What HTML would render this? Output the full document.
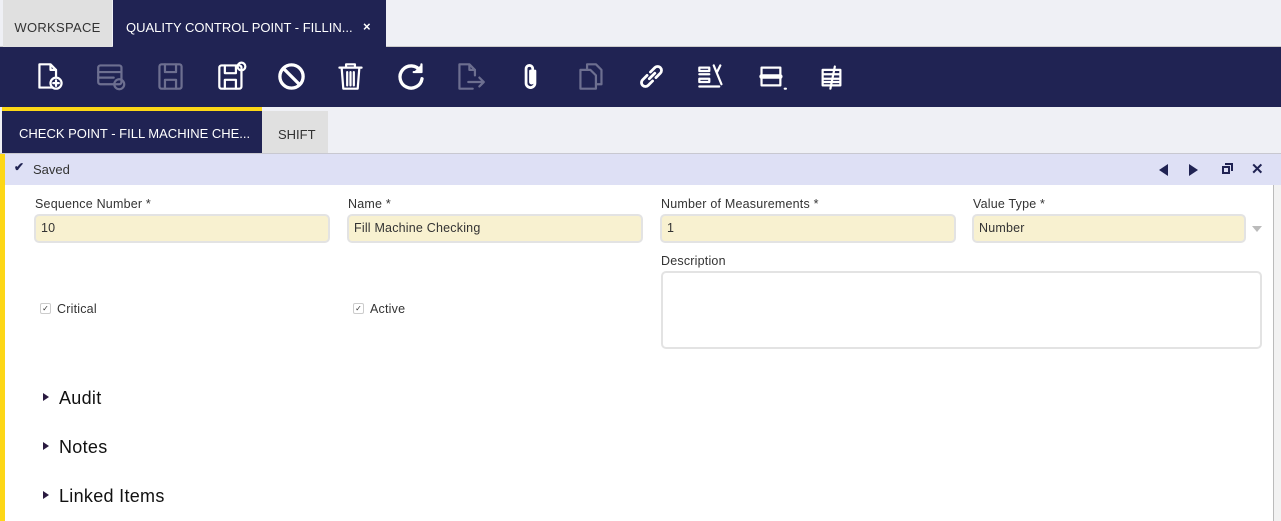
<!DOCTYPE html>
<html><head><style>
*{box-sizing:border-box;margin:0;padding:0}
body{width:1281px;height:521px;overflow:hidden;background:#fff;font-family:"Liberation Sans",sans-serif;position:relative;color:#333}
.a{position:absolute}
.lbl{position:absolute;font-size:12.5px;color:#333;letter-spacing:0.2px}
.inp{position:absolute;height:29px;background:#f8f1d0;border:2px solid #e3e3e3;border-radius:5px;font-size:12.5px;padding:5px 0 0 5px;color:#333;letter-spacing:0.2px}
.sec{position:absolute;left:43px;font-size:18px;color:#111;letter-spacing:0.3px}
.sec:before{content:"";display:inline-block;border-left:6px solid #2a1a40;border-top:4px solid transparent;border-bottom:4px solid transparent;margin-right:10px;vertical-align:3px}
.cb{position:absolute;width:11px;height:11px;border:1px solid #ccc;border-radius:2px;font-size:8px;line-height:9px;text-align:center;color:#333}
svg.i{position:absolute;top:61px;width:31px;height:31px;fill:none;stroke-width:2;stroke-linecap:round;stroke-linejoin:round}
</style></head><body>
<div class="a" style="left:0;top:0;width:1281px;height:47px;background:#eff0f5"></div>
<div class="a" style="left:0;top:46px;width:1281px;height:1px;background:#ccc"></div>
<div class="a" style="left:3px;top:0;width:109px;height:47px;background:#e0e0e0;font-size:13px;color:#333;padding-top:20px;text-align:center;letter-spacing:0.3px">WORKSPACE</div>
<div class="a" style="left:113px;top:0;width:273px;height:47px;background:#202353;color:#fff;font-size:13px;padding:20px 0 0 13px">QUALITY CONTROL POINT - FILLIN...<span style="position:absolute;left:250px;top:19px;font-weight:bold">×</span></div>
<div class="a" style="left:0;top:47px;width:1281px;height:60px;background:#202353"></div>
<svg class="i" style="left:35px" stroke="#fff" viewBox="0 0 28 28"><path d="M16 24H4V3h10l5 5v6M14 3v5h5"/><circle cx="19" cy="20" r="5"/><path d="M19 17.5v5M16.5 20h5"/></svg>
<svg class="i" style="left:96px" stroke="#6d6f90" viewBox="0 0 28 28"><rect x="2" y="4" width="21" height="17" rx="2"/><path d="M2 10h21M2 15h14"/><circle cx="21" cy="21" r="4.5"/></svg>
<svg class="i" style="left:155px" stroke="#6d6f90" viewBox="0 0 28 28"><rect x="4" y="3" width="20" height="22" rx="2"/><path d="M9 3v7h10V3M9 25v-8h10v8"/></svg>
<svg class="i" style="left:216px" stroke="#fff" viewBox="0 0 28 28"><rect x="3" y="4" width="20" height="21" rx="2"/><path d="M8 4v7h10V4M8 25v-8h10v8"/><circle cx="23" cy="5" r="3.5"/></svg>
<svg class="i" style="left:276px" stroke="#fff" viewBox="0 0 28 28"><circle cx="14" cy="14" r="10.5" stroke-width="3"/><path d="M7 7l14 14" stroke-width="3"/></svg>
<svg class="i" style="left:335px" stroke="#fff" viewBox="0 0 28 28"><path d="M4 6h20M10 6V3h8v3M6 6l1.5 19h13L22 6M11 10v12M14 10v12M17 10v12"/></svg>
<svg class="i" style="left:396px" stroke="#fff" viewBox="0 0 28 28"><path d="M22 9a10 10 0 1 0 1.5 7" stroke-width="3"/><path d="M23 3v7h-7" fill="#fff" stroke-width="2"/></svg>
<svg class="i" style="left:455px" stroke="#6d6f90" viewBox="0 0 28 28"><path d="M16 25H4V3h9l5 5v5M13 3v5h5M12 19h14M22 15l4 4-4 4"/></svg>
<svg class="i" style="left:515px" stroke="#fff" viewBox="0 0 28 28"><path d="M18 9v11a4 4 0 0 1-8 0V7a3 3 0 0 1 6 0v12a1 1 0 0 1-2 0V9" stroke-width="2.5"/></svg>
<svg class="i" style="left:576px" stroke="#6d6f90" viewBox="0 0 28 28"><path d="M10 8V3h8l5 5v13h-5M4 8h9l5 5v12H4z"/></svg>
<svg class="i" style="left:636px" stroke="#fff" viewBox="0 0 28 28"><path d="M12 16l5-5M10 13l-4 4a3.5 3.5 0 0 0 5 5l4-4M18 15l4-4a3.5 3.5 0 0 0-5-5l-4 4" stroke-width="2.5"/></svg>
<svg class="i" style="left:696px" stroke="#fff" viewBox="0 0 28 28" stroke-width="1.5"><path d="M3 6h9v3H3zM3 12h9M3 16h9v3H3zM3 23h18M16 4l7 17M22 4l-3 6"/></svg>
<svg class="i" style="left:756px" stroke="#fff" viewBox="0 0 28 28"><rect x="5" y="6" width="17" height="16"/><path d="M5 14h17" stroke-width="4"/><path d="M26 25h1"/></svg>
<svg class="i" style="left:816px" stroke="#fff" viewBox="0 0 28 28" stroke-width="1.5"><path d="M6 8h16v14H6zM6 12h16M6 16h16M6 19h16M17 5l-4 20"/></svg>
<div class="a" style="left:0;top:107px;width:1281px;height:47px;background:#eff0f5"></div>
<div class="a" style="left:2px;top:107px;width:260px;height:4px;background:#fdd716"></div>
<div class="a" style="left:2px;top:111px;width:260px;height:43px;background:#202353;color:#fff;font-size:13px;padding:15px 0 0 17px">CHECK POINT - FILL MACHINE CHE...</div>
<div class="a" style="left:262px;top:111px;width:66px;height:43px;background:#e0e0e0;color:#333;font-size:13px;padding:16px 0 0 16px">SHIFT</div>
<div class="a" style="left:0;top:153px;width:1281px;height:1px;background:#c8c8d0"></div>
<div class="a" style="left:0;top:154px;width:1281px;height:31px;background:#dee0f5;font-size:13px;color:#333;padding:8px 0 0 33px">Saved</div>
<div class="a" style="left:14px;top:160px;font-size:12px;color:#202353;font-weight:bold">✔</div>
<div class="a" style="left:1159px;top:164px;border-right:9px solid #202353;border-top:6px solid transparent;border-bottom:6px solid transparent"></div>
<div class="a" style="left:1189px;top:164px;border-left:9px solid #202353;border-top:6px solid transparent;border-bottom:6px solid transparent"></div>
<div class="a" style="left:1222px;top:166px;width:8px;height:8px;border:2px solid #202353"></div>
<div class="a" style="left:1225px;top:163px;width:8px;height:8px;border-top:2px solid #202353;border-right:2px solid #202353"></div>
<div class="a" style="left:1251px;top:160px;font-size:15px;font-weight:bold;color:#202353">✕</div>
<div class="a" style="left:0;top:154px;width:5px;height:367px;background:#fdd716"></div>
<div class="a" style="left:1273px;top:185px;width:8px;height:336px;background:#f2f2f2;border-left:1px solid #bbb"></div>
<div class="lbl" style="left:35px;top:197px">Sequence Number *</div>
<div class="lbl" style="left:348px;top:197px">Name *</div>
<div class="lbl" style="left:661px;top:197px">Number of Measurements *</div>
<div class="lbl" style="left:973px;top:197px">Value Type *</div>
<div class="inp" style="left:34px;top:214px;width:296px">10</div>
<div class="inp" style="left:347px;top:214px;width:296px">Fill Machine Checking</div>
<div class="inp" style="left:660px;top:214px;width:296px">1</div>
<div class="inp" style="left:972px;top:214px;width:274px">Number</div>
<div class="a" style="left:1252px;top:226px;border-top:6px solid #bbb;border-left:5px solid transparent;border-right:5px solid transparent"></div>
<div class="lbl" style="left:661px;top:254px">Description</div>
<div class="a" style="left:661px;top:271px;width:601px;height:78px;border:2px solid #e3e3e3;border-radius:5px"></div>
<div class="cb" style="left:40px;top:303px">✓</div><div class="lbl" style="left:57px;top:302px">Critical</div>
<div class="cb" style="left:353px;top:303px">✓</div><div class="lbl" style="left:370px;top:302px">Active</div>
<div class="sec" style="top:388px">Audit</div>
<div class="sec" style="top:437px">Notes</div>
<div class="sec" style="top:486px">Linked Items</div>
</body></html>
